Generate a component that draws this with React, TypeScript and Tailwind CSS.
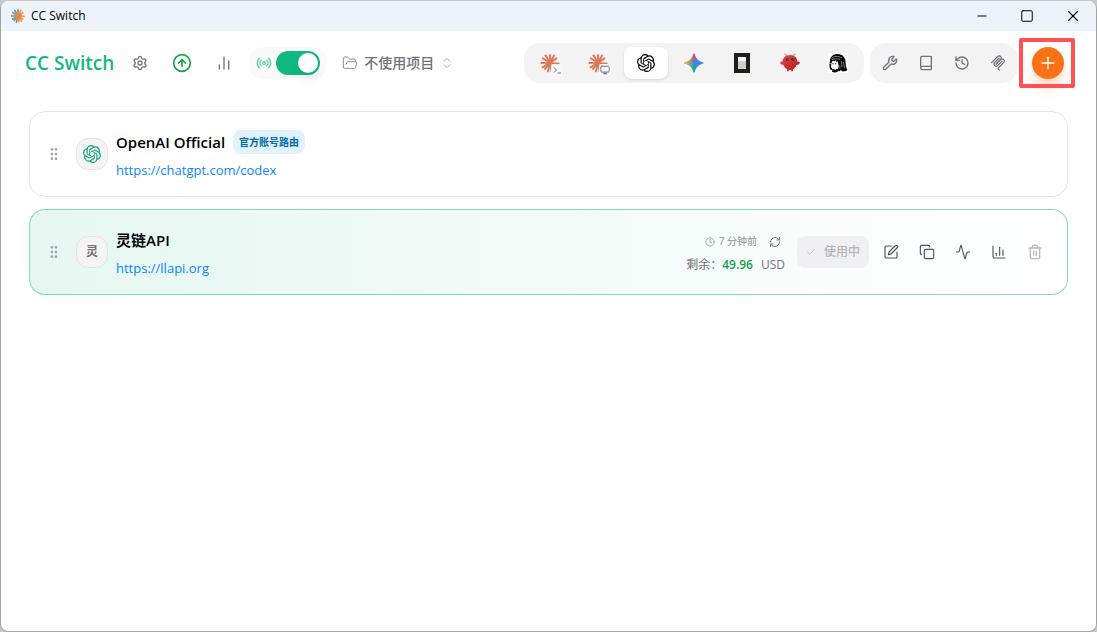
import type { ReactNode } from "react";
import {
  Activity,
  BarChart2,
  Book,
  ChartColumn,
  Check,
  ChevronsUpDown,
  CircleArrowUp,
  Clock,
  Copy,
  FolderOpen,
  GripVertical,
  History,
  Minus,
  Monitor,
  Plus,
  Radio,
  RefreshCw,
  Settings,
  Square,
  SquarePen,
  Trash2,
  Wrench,
  X,
} from "lucide-react";
import { SiOpenai } from "react-icons/si";

// angle and length of every ray of the Claude burst
const rays = [
  [4, 12], [34, 11], [56, 12], [80, 11], [104, 12], [130, 11],
  [150, 12], [180, 12], [213, 12], [240, 12], [270, 11], [298, 12], [324, 11],
];

function ClaudeIcon({ className }: { className?: string }) {
  return (
    <svg viewBox="0 0 24 24" className={className} fill="currentColor">
      {rays.map(([angle, length]) => (
        <path
          key={angle}
          d={`M12 11L${11 + length} 10.800q1 1.200 0 2.400L12 13z`}
          transform={`rotate(${angle} 12 12)`}
        />
      ))}
      <circle cx="12" cy="12" r="3" />
    </svg>
  );
}

function AppLogo() {
  return (
    <svg viewBox="0 0 24 24" className="size-3.5" fill="none" strokeWidth="2.8">
      {rays.map(([angle, length]) => (
        <path
          key={angle}
          d={`M12 12h${length}`}
          stroke={angle > 100 && angle < 290 ? "#569c9c" : "#e8a04c"}
          transform={`rotate(${angle} 12 12)`}
        />
      ))}
      <circle cx="12" cy="12" r="6.500" fill="#e8834f" />
    </svg>
  );
}

function GeminiIcon() {
  return (
    <svg viewBox="0 0 24 24" className="size-5">
      <defs>
        <linearGradient id="gem-red" x1="10" y1="1" x2="12" y2="13" gradientUnits="userSpaceOnUse">
          <stop stopColor="#f94543" />
          <stop offset="1" stopColor="#f94543" stopOpacity="0" />
        </linearGradient>
        <linearGradient id="gem-yellow" x1="2" y1="12" x2="12" y2="12" gradientUnits="userSpaceOnUse">
          <stop stopColor="#fabc12" />
          <stop offset="1" stopColor="#fabc12" stopOpacity="0" />
        </linearGradient>
        <linearGradient id="gem-green" x1="10" y1="23" x2="12" y2="12" gradientUnits="userSpaceOnUse">
          <stop stopColor="#08b962" />
          <stop offset="1" stopColor="#08b962" stopOpacity="0" />
        </linearGradient>
      </defs>
      {["#3186ff", "url(#gem-green)", "url(#gem-red)", "url(#gem-yellow)"].map((fill) => (
        <path
          key={fill}
          fill={fill}
          d="M12 0.5c.4 0 .6.2.7.6 1.2 5.2 5 9 10.200 10.200.4.1.6.3.6.7s-.2.6-.6.7c-5.200 1.200-9 5-10.200 10.200-.1.4-.3.6-.7.6s-.6-.2-.7-.6c-1.200-5.200-5-9-10.200-10.200-.4-.1-.6-.3-.6-.7s.2-.6.6-.7c5.200-1.200 9-5 10.200-10.200.1-.4.3-.6.7-.6z"
        />
      ))}
    </svg>
  );
}

function OpenCodeIcon() {
  return (
    <svg viewBox="0 0 16 20" className="h-5 w-4">
      <path fill="#211e1e" d="M0 0h16v20H0z" />
      <path fill="#f7f7f7" d="M4 4h8v4H4z" />
      <path fill="#cfcecd" d="M4 8h8v8H4z" />
    </svg>
  );
}

function LobsterIcon() {
  return (
    <svg viewBox="0 0 24 24" className="size-5">
      <defs>
        <linearGradient id="lobster" x1="0" y1="0" x2="1" y2="1">
          <stop stopColor="#f04848" />
          <stop offset="1" stopColor="#a81818" />
        </linearGradient>
      </defs>
      <path d="M8 4C7.500 2 6.500 1 5 1.500M16 4c.5-2 1.500-3 3-2.500" stroke="#f58a80" strokeWidth="1.400" fill="none" />
      <path
        fill="url(#lobster)"
        d="M12 2.500c5.800 0 8.700 4 8.900 7.800 1.900-.6 3.100.8 2.600 2.200-.5 1.300-2 1.800-3.300 1.300-.9 2.600-2.600 4.700-4.700 5.700V22h-2v-1.800a6 6 0 0 1-3 0V22h-2v-2.500c-2.100-1-3.800-3.100-4.700-5.700-1.300.5-2.800 0-3.300-1.300-.5-1.400.7-2.800 2.600-2.200C3.300 6.500 6.200 2.500 12 2.500z"
      />
      <circle cx="8.800" cy="7.800" r="1.500" fill="#0b2a33" />
      <circle cx="15.200" cy="7.800" r="1.500" fill="#0b2a33" />
      <circle cx="9.200" cy="7.500" r=".7" fill="#00d5c4" />
      <circle cx="15.600" cy="7.500" r=".7" fill="#00d5c4" />
    </svg>
  );
}

function HermesIcon() {
  return (
    <svg viewBox="0 0 20 20" className="size-5">
      <path fill="#fff" d="M0 0h20v20H0z" />
      <path
        fill="#050505"
        d="M2 8C2 3.500 5.500.8 10 1c4.500.2 7 3.200 7.500 7.500.3 3.300.5 6 1.800 8.500l-1.300 1-3.500.4-1.500-1.400-2 1.500-2-1.500c1.500-1.800 1.800-3.500 1.500-5.500L9.500 8 8.300 9.500 8 7 6.500 8.500 5.500 7.500 4 8.500l-.5 2L1.500 10z"
      />
      <path fill="#050505" d="M1.500 10.500l1.800.2-.3 3 1.500 2.500-1.500 1-1.500-2.500zM4.500 16l3 .8 1.200-1.300 1.300 1.500-.5 2-3 .5-2.500-.8zM4.500 10.300h1.300v.9H4.500zM7.200 10.300h1v.9h-1z" />
      <path
        d="M3.500 5.500C6 2.800 10 3 14 4.800M4 6.800c2-1.200 5-1.300 8-.3M13.200 8l.8 6M15.500 9l1 6M11.800 12.500l.2 3"
        stroke="#fff"
        strokeWidth=".5"
        fill="none"
      />
    </svg>
  );
}

function McpIcon() {
  return (
    <svg viewBox="0 0 180 180" className="size-4" fill="none" stroke="currentColor" strokeWidth="13" strokeLinecap="round">
      <path d="M18 84.853L85.882 16.971c9.373-9.373 24.569-9.373 33.941 0 9.373 9.372 9.373 24.568 0 33.941L68.558 102.177" />
      <path d="M69.265 101.470L119.823 50.912c9.373-9.373 24.569-9.373 33.942 0l.353.353c9.373 9.373 9.373 24.569 0 33.941L92.725 146.600c-3.124 3.124-3.124 8.189 0 11.313l12.606 12.607" />
      <path d="M102.853 33.941L52.648 84.146c-9.372 9.372-9.372 24.568 0 33.941 9.373 9.372 24.569 9.372 33.941 0L136.794 67.882" />
    </svg>
  );
}

function IconButton({ label, className = "", children }: { label: string; className?: string; children: ReactNode }) {
  return (
    <button type="button" aria-label={label} className={`flex size-8 items-center justify-center rounded-lg ${className}`}>
      {children}
    </button>
  );
}

function ClaudeTab({ children }: { children: ReactNode }) {
  return (
    <span className="relative">
      <ClaudeIcon className="size-5 text-[#d97757]" />
      <span className="absolute -right-0.5 -bottom-0.5 flex size-3 translate-x-px translate-y-px items-center justify-center rounded-xs bg-[#f8f8f8] text-zinc-500">
        {children}
      </span>
    </span>
  );
}

const apps = [
  {
    name: "Claude Code",
    icon: (
      <ClaudeTab>
        <svg viewBox="0 0 10 10" className="size-2.5" fill="none" stroke="currentColor" strokeWidth="1">
          <path d="M2 2.500l2.500 2.500L2 7.500M5.500 8H9" />
        </svg>
      </ClaudeTab>
    ),
  },
  { name: "Claude Desktop", icon: <ClaudeTab><Monitor className="size-2.5" strokeWidth={2.4} /></ClaudeTab> },
  { name: "Codex", icon: <SiOpenai className="size-[18px]" />, active: true },
  { name: "Gemini", icon: <GeminiIcon /> },
  { name: "OpenCode", icon: <OpenCodeIcon /> },
  { name: "OpenClaw", icon: <LobsterIcon /> },
  { name: "Hermes", icon: <HermesIcon /> },
];

function TitleBar() {
  return (
    <div className="flex h-[30px] items-center bg-[#eef3f9] pl-2.5 text-xs text-black">
      <AppLogo />
      <span className="ml-1.5">CC Switch</span>
      <div className="ml-auto flex">
        <button type="button" aria-label="最小化" className="flex h-[30px] w-[45px] items-center justify-center">
          <Minus className="size-3.5" strokeWidth={1.7} />
        </button>
        <button type="button" aria-label="最大化" className="flex h-[30px] w-[45px] items-center justify-center">
          <Square className="size-3.5" strokeWidth={1.7} />
        </button>
        <button type="button" aria-label="关闭" className="flex h-[30px] w-[47px] items-center justify-center">
          <X className="size-[18px]" strokeWidth={1.5} />
        </button>
      </div>
    </div>
  );
}

function Header() {
  return (
    <header className="flex h-16 items-center pr-8 pl-6 text-zinc-500">
      <a href="#" className="text-[19px] font-semibold whitespace-nowrap text-[#10b981]">
        CC Switch
      </a>
      <IconButton label="设置" className="ml-2.5">
        <Settings className="size-4" />
      </IconButton>
      <IconButton label="更新" className="ml-2.5 text-[#16a34a]">
        <CircleArrowUp className="size-5" />
      </IconButton>
      <IconButton label="使用统计" className="ml-2.5">
        <BarChart2 className="size-4" />
      </IconButton>
      <label className="ml-2.5 flex h-8 items-center gap-1 rounded-xl bg-[#f9f9f9] px-1.5">
        <Radio className="size-4 text-[#10b981] opacity-70" />
        <input type="checkbox" role="switch" aria-label="本地路由" defaultChecked className="peer sr-only" />
        <span className="flex h-6 w-11 items-center justify-end rounded-full bg-[#10b981] p-0.5">
          <span className="size-5 rounded-full bg-white shadow-lg" />
        </span>
      </label>
      <button type="button" className="ml-4 flex items-center text-sm font-medium whitespace-nowrap">
        <FolderOpen className="size-4 opacity-80" strokeWidth={1.5} />
        <span className="ml-1.5">不使用项目</span>
        <ChevronsUpDown className="ml-1.5 size-3.5 opacity-60" strokeWidth={1.7} />
      </button>

      <div className="ml-auto flex items-center gap-1.5">
        <nav className="flex gap-1 rounded-2xl bg-[#f3f3f3] p-1">
          {apps.map((app) => (
            <button
              key={app.name}
              type="button"
              aria-label={app.name}
              className={`flex h-8 w-11 items-center justify-center rounded-lg ${app.active ? "bg-white text-black shadow-sm" : ""}`}
            >
              {app.icon}
            </button>
          ))}
        </nav>
        <div className="flex gap-1 rounded-2xl bg-[#f3f3f3] p-1">
          <IconButton label="技能"><Wrench className="size-4" /></IconButton>
          <IconButton label="提示词"><Book className="size-4" /></IconButton>
          <IconButton label="会话历史"><History className="size-4" /></IconButton>
          <IconButton label="MCP"><McpIcon /></IconButton>
        </div>
      </div>
      <div className="relative ml-3.5">
        <button
          type="button"
          aria-label="添加供应商"
          className="flex size-8 items-center justify-center rounded-full bg-[#f97316] text-white shadow-lg shadow-[#f97316]/30"
        >
          <Plus className="size-5" strokeWidth={1.7} />
        </button>
        <span className="pointer-events-none absolute -inset-y-[9px] -right-[11px] -left-[13px] rounded-xs border-4 border-[#ff5252]" />
      </div>
    </header>
  );
}

interface ProviderCardProps {
  name: string;
  url: string;
  logo: ReactNode;
  badge?: string;
  active?: boolean;
  children?: ReactNode;
}

function ProviderCard({ name, url, logo, badge, active, children }: ProviderCardProps) {
  return (
    <article
      className={`flex h-[86px] items-center rounded-2xl border px-4 ${
        active ? "border-[#10b981]/50 bg-linear-to-r from-[#e6f7f1] to-white" : "border-zinc-200 bg-white"
      }`}
    >
      <button type="button" aria-label="拖拽排序" className="text-zinc-400">
        <GripVertical className="size-4" />
      </button>
      <div className="ml-3.5 flex size-8 items-center justify-center rounded-xl border border-zinc-200 bg-zinc-100 text-xs font-bold text-zinc-500">
        {logo}
      </div>
      <div className="ml-2 flex flex-col gap-1">
        <div className="flex h-7 items-center gap-2">
          <h3 className="text-[15px] leading-none font-semibold text-black">{name}</h3>
          {badge && (
            <span className="rounded-lg bg-sky-100 px-1.5 py-1 text-[10px] leading-4 font-bold text-[#0369a1]">{badge}</span>
          )}
        </div>
        <a href={url} className="text-[13px] leading-5 text-[#0a84ff]">
          {url}
        </a>
      </div>
      {children && <div className="ml-auto flex items-center">{children}</div>}
    </article>
  );
}

export default function App() {
  return (
    <div className="flex min-h-screen flex-col bg-[#c9c9c9] pt-px font-['Open_Sans','Noto_Sans_CJK_SC',sans-serif]">
      <div className="flex flex-1 flex-col overflow-hidden rounded-lg border border-t-0 border-[#a3a3a3] bg-white">
        <TitleBar />
        <Header />
        <main className="flex flex-col gap-3 px-7 pt-4">
          <ProviderCard
            name="OpenAI Official"
            url="https://chatgpt.com/codex"
            badge="官方账号路由"
            logo={<SiOpenai className="size-[18px] text-[#10a37f]" />}
          />
          <ProviderCard name="灵链API" url="https://llapi.org" logo="灵" active>
            <div className="flex flex-col items-end gap-2 pt-1 text-xs whitespace-nowrap text-zinc-500">
              <div className="flex items-center pr-1 text-[10px]">
                <Clock className="mr-1 size-2.5 opacity-70" />
                <span className="opacity-80">7 分钟前</span>
                <button type="button" aria-label="刷新用量" className="ml-3">
                  <RefreshCw className="size-3" />
                </button>
              </div>
              <div className="flex items-center gap-2">
                <span>剩余：</span>
                <span className="-ml-2 font-semibold text-[#16a34a]">49.96</span>
                <span>USD</span>
              </div>
            </div>
            <button
              type="button"
              disabled
              className="ml-3 flex h-8 w-[72px] items-center justify-center gap-2 rounded-lg bg-[#f0f0f2] text-xs font-medium text-[#b4b4ba]"
            >
              <Check className="size-2.5" />
              使用中
            </button>
            <div className="ml-1.5 flex gap-1 text-zinc-600">
              <IconButton label="编辑"><SquarePen className="size-4" strokeWidth={1.7} /></IconButton>
              <IconButton label="复制"><Copy className="size-4" strokeWidth={1.7} /></IconButton>
              <IconButton label="测试"><Activity className="size-4" strokeWidth={1.7} /></IconButton>
              <IconButton label="用量"><ChartColumn className="size-4" strokeWidth={1.7} /></IconButton>
              <IconButton label="删除" className="opacity-40"><Trash2 className="size-4" /></IconButton>
            </div>
          </ProviderCard>
        </main>
      </div>
    </div>
  );
}
